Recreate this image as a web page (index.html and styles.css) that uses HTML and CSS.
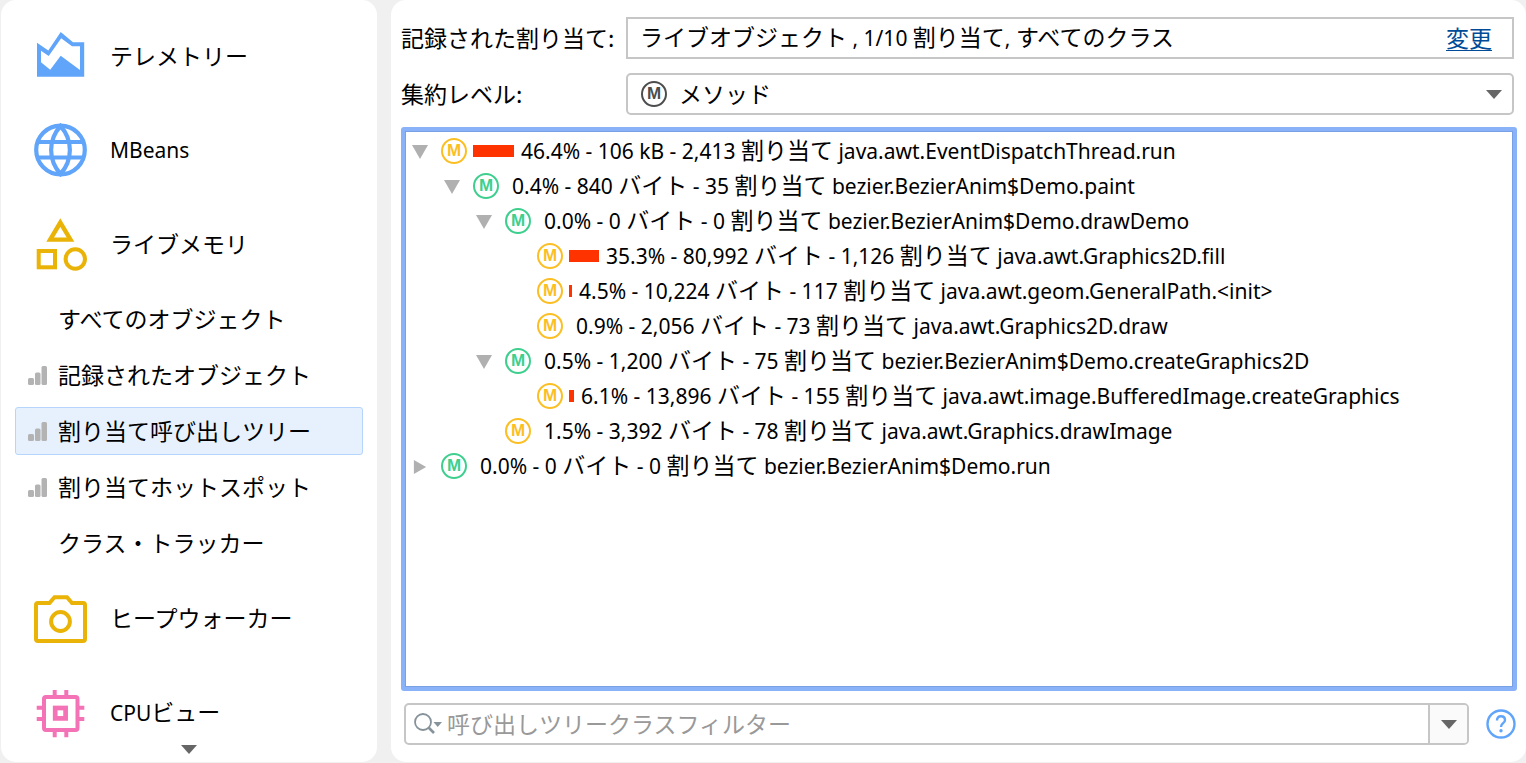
FILE: index.html
```html
<!DOCTYPE html>
<html lang="ja">
<head>
    <meta charset="UTF-8">
    <meta name="viewport" content="width=device-width, initial-scale=1.0">
    <title>割り当て呼び出しツリー</title>
    <link rel="stylesheet" href="styles.css">
</head>
<body>
    <svg class="defs" aria-hidden="true">
        <symbol id="open" viewBox="0 0 16 14"><path d="M0 0H16L8 14Z" fill="currentColor"/></symbol>
        <symbol id="closed" viewBox="0 0 14 16"><path d="M0 0V16L14 8Z" fill="currentColor"/></symbol>
        <symbol id="arrow" viewBox="0 0 16 9"><path d="M0 0H16L8 9Z" fill="currentColor"/></symbol>
        <symbol id="bars" viewBox="0 0 20 20">
            <g fill="currentColor">
                <rect x="0" y="12" width="6" height="7" rx="1.5"/>
                <rect x="7" y="6.500" width="5.500" height="12.500" rx="1.5"/>
                <rect x="13.500" y="0" width="5.500" height="19" rx="1.5"/>
            </g>
        </symbol>
    </svg>

    <nav class="sidebar">
        <a class="view" href="#telemetry">
            <svg class="view-icon blue" viewBox="0 0 54 54"><path fill="currentColor" fill-rule="evenodd" d="M3 13.7L14.3 21.5L26.7 3L39 13.3H50.2V47.7H3ZM7 21.7V33.3L16.2 40.7L26.7 26.7L46 41V17.3H38L27.2 9.3L14.7 27Z"/></svg>
            <span class="text">テレメトリー</span>
        </a>
        <a class="view" href="#mbeans">
            <svg class="view-icon blue" viewBox="0 0 54 54"><g fill="none" stroke="currentColor" stroke-width="4.2"><circle cx="26.5" cy="27" r="24.3"/><path d="M26.5 3C14 17 14 37 26.5 51C39 37 39 17 26.5 3ZM4 19H49M4 34.5H49"/></g></svg>
            <span class="latin">MBeans</span>
        </a>
        <a class="view" href="#memory">
            <svg class="view-icon yellow" viewBox="0 0 54 54"><path fill="currentColor" fill-rule="evenodd" d="M26.3 1.3L40.3 24.7H12.3ZM26.3 10L20 20.6H32.7Z"/><g fill="none" stroke="currentColor" stroke-width="4"><rect x="4.7" y="34" width="16.3" height="16.3"/><circle cx="41.3" cy="42" r="9.7"/></g></svg>
            <span class="text">ライブメモリ</span>
        </a>
        <ul class="subviews">
            <li><a class="subview" href="#all"><span class="text">すべてのオブジェクト</span></a></li>
            <li><a class="subview" href="#recorded"><svg class="bars"><use href="#bars"/></svg><span class="text">記録されたオブジェクト</span></a></li>
            <li><a class="subview selected" href="#tree" aria-current="page"><svg class="bars"><use href="#bars"/></svg><span class="text">割り当て呼び出しツリー</span></a></li>
            <li><a class="subview" href="#hotspots"><svg class="bars"><use href="#bars"/></svg><span class="text">割り当てホットスポット</span></a></li>
            <li><a class="subview" href="#tracker"><span class="text">クラス・トラッカー</span></a></li>
        </ul>
        <a class="view" href="#heap">
            <svg class="view-icon yellow" viewBox="0 0 54 54"><g fill="none" stroke="currentColor" stroke-width="4"><path d="M4 12H15.5L20.5 6.2H33L38 12H49Q51 12 51 14V48Q51 50 49 50H4Q2 50 2 48V14Q2 12 4 12Z"/><circle cx="26.5" cy="30.5" r="9.4"/></g></svg>
            <span class="text">ヒープウォーカー</span>
        </a>
        <a class="view" href="#cpu">
            <svg class="view-icon pink" viewBox="0 0 54 54"><g fill="none" stroke="currentColor" stroke-width="4"><rect x="10" y="12" width="33.5" height="33" rx="2"/><rect x="21.2" y="23" width="10.4" height="10.4" stroke-width="4.7"/><path d="M20.7 5V11M32.3 5V11M20.7 46V52.3M32.3 46V52.3M2.7 22.7H9M2.7 34H9M44 22.7H50.3M44 34H50.3"/></g></svg>
            <span><span class="latin">CPU</span>ビュー</span>
        </a>
        <button class="scroll-down" type="button" aria-label="下へ"><svg class="arrow"><use href="#arrow"/></svg></button>
    </nav>

    <main class="content">
        <div class="settings">
            <span class="text">記録された割り当て:</span>
            <div class="recorded">
                <span class="text">ライブオブジェクト<span class="latin"> , 1/10 </span>割り当て<span class="latin">, </span>すべてのクラス</span>
                <a class="change text" href="#change">変更</a>
            </div>
            <label class="text" for="level">集約レベル:</label>
            <div class="level">
                <span class="method level-icon">M</span>
                <select id="level">
                    <option>メソッド</option>
                </select>
                <svg class="arrow level-arrow"><use href="#arrow"/></svg>
            </div>
        </div>

        <ul class="tree" tabindex="0">
            <li>
                <div class="node"><svg class="toggle"><use href="#open"/></svg><span class="method amber">M</span><span class="bar" style="width: 41px"></span><span class="text">46.4% - 106 kB - 2,413 <b>割り当て</b> java.awt.EventDispatchThread.run</span></div>
                <ul>
                    <li>
                        <div class="node"><svg class="toggle"><use href="#open"/></svg><span class="method green">M</span><span class="bar"></span><span class="text">0.4% - 840 <b>バイト</b> - 35 <b>割り当て</b> bezier.BezierAnim$Demo.paint</span></div>
                        <ul>
                            <li>
                                <div class="node"><svg class="toggle"><use href="#open"/></svg><span class="method green">M</span><span class="bar"></span><span class="text">0.0% - 0 <b>バイト</b> - 0 <b>割り当て</b> bezier.BezierAnim$Demo.drawDemo</span></div>
                                <ul>
                                    <li><div class="node"><span class="toggle"></span><span class="method amber">M</span><span class="bar" style="width: 30px"></span><span class="text">35.3% - 80,992 <b>バイト</b> - 1,126 <b>割り当て</b> java.awt.Graphics2D.fill</span></div></li>
                                    <li><div class="node"><span class="toggle"></span><span class="method amber">M</span><span class="bar" style="width: 3px"></span><span class="text">4.5% - 10,224 <b>バイト</b> - 117 <b>割り当て</b> java.awt.geom.GeneralPath.&lt;init&gt;</span></div></li>
                                    <li><div class="node"><span class="toggle"></span><span class="method amber">M</span><span class="bar"></span><span class="text">0.9% - 2,056 <b>バイト</b> - 73 <b>割り当て</b> java.awt.Graphics2D.draw</span></div></li>
                                </ul>
                            </li>
                            <li>
                                <div class="node"><svg class="toggle"><use href="#open"/></svg><span class="method green">M</span><span class="bar"></span><span class="text">0.5% - 1,200 <b>バイト</b> - 75 <b>割り当て</b> bezier.BezierAnim$Demo.createGraphics2D</span></div>
                                <ul>
                                    <li><div class="node"><span class="toggle"></span><span class="method amber">M</span><span class="bar" style="width: 5px"></span><span class="text">6.1% - 13,896 <b>バイト</b> - 155 <b>割り当て</b> java.awt.image.BufferedImage.createGraphics</span></div></li>
                                </ul>
                            </li>
                            <li><div class="node"><span class="toggle"></span><span class="method amber">M</span><span class="bar"></span><span class="text">1.5% - 3,392 <b>バイト</b> - 78 <b>割り当て</b> java.awt.Graphics.drawImage</span></div></li>
                        </ul>
                    </li>
                </ul>
            </li>
            <li>
                <div class="node"><svg class="toggle"><use href="#closed"/></svg><span class="method green">M</span><span class="bar"></span><span class="text">0.0% - 0 <b>バイト</b> - 0 <b>割り当て</b> bezier.BezierAnim$Demo.run</span></div>
            </li>
        </ul>

        <div class="footer">
            <div class="filter">
                <svg class="search" viewBox="0 0 28 22"><g fill="none" stroke="currentColor"><circle cx="9" cy="9" r="8" stroke-width="1.8"/><path d="M14.5 14.5L20 20" stroke-width="2.6"/></g><path d="M19.5 9H28L23.7 14Z" fill="currentColor"/></svg>
                <input type="text" placeholder="呼び出しツリークラスフィルター" aria-label="呼び出しツリークラスフィルター">
                <button class="history" type="button" aria-label="履歴"><svg class="arrow"><use href="#arrow"/></svg></button>
            </div>
            <button class="help" type="button" aria-label="ヘルプ">
                <svg viewBox="0 0 30 30"><circle cx="15" cy="15" r="13.5" fill="none" stroke="currentColor" stroke-width="2.4"/><path d="M11 11.5Q11 7.3 15 7.3Q19 7.3 19 11Q19 13 17 14.3Q15 15.6 15 18" fill="none" stroke="currentColor" stroke-width="2.4"/><circle cx="15" cy="21.7" r="1.7" fill="currentColor"/></svg>
            </button>
        </div>
    </main>
</body>
</html>
```

FILE: styles.css
```css
* {
    box-sizing: border-box;
}
body {
    display: flex;
    gap: 14px;
    height: 100vh;
    margin: 0;
    padding: 0 0 1px 1px;
    background: #f0f0f0;
    color: #000;
    font-family: "Noto Sans CJK JP", sans-serif;
    font-size: 23px;
    line-height: 34px;
}
ul {
    list-style: none;
    margin: 0;
    padding: 0;
}
a {
    color: inherit;
    text-decoration: none;
}
button {
    display: flex;
    align-items: center;
    justify-content: center;
    border: 0;
    padding: 0;
    background: none;
}
svg {
    display: block;
    flex: none;
}
.defs {
    position: absolute;
    width: 0;
    height: 0;
}
.latin {
    font-family: "Noto Sans", sans-serif;
    font-size: 21px;
}
/* optical centring next to icons */
.text {
    padding-bottom: 2px;
}

/* sidebar */
.sidebar {
    position: relative;
    flex: none;
    width: 376px;
    padding: 9px 14px 0;
    border-radius: 15px;
    background: #fff;
    overflow: hidden;
}
.view {
    display: flex;
    align-items: center;
    gap: 22px;
    height: 94px;
    padding-left: 19px;
}
.view-icon {
    width: 54px;
    height: 54px;
}
.blue {
    color: #60a5fa;
}
.yellow {
    color: #eab308;
}
.pink {
    color: #f472b6;
}
.subviews {
    display: flex;
    flex-direction: column;
    gap: 8px;
    padding: 4px 0;
}
.subview {
    display: flex;
    align-items: center;
    height: 48px;
    padding-left: 42px;
    border: 1px solid transparent;
    border-radius: 3px;
}
.subview:has(.bars) {
    padding-left: 12px;
}
.selected {
    border-color: #b5d5fd;
    background: #e7f1fe;
}
.bars {
    width: 20px;
    height: 20px;
    margin: 2px 10px 0 0;
    color: #b3b3b3;
}
.scroll-down {
    position: absolute;
    left: 0;
    right: 0;
    bottom: 8px;
    width: 100%;
}
.arrow {
    width: 16px;
    height: 9px;
    color: #666;
}

/* main panel */
.content {
    display: flex;
    flex-direction: column;
    flex: 1;
    min-width: 0;
    padding: 17px 9px 17px 10px;
    border-radius: 15px;
    background: #fff;
}
.settings {
    display: grid;
    grid-template-columns: 225px 1fr;
    grid-auto-rows: 42px;
    row-gap: 14px;
    align-items: center;
    margin: 0 3px 12px 0;
}
.recorded {
    display: flex;
    align-items: center;
    justify-content: space-between;
    height: 42px;
    padding: 0 20px 0 12px;
    border: 2px solid #c6c6c6;
}
.change {
    color: #004b97;
    text-decoration: underline;
    text-decoration-thickness: 1px;
    text-underline-offset: 3px;
}
.level {
    position: relative;
    height: 42px;
}
.level select {
    width: 100%;
    height: 100%;
    padding: 0 40px 2px 51px;
    border: 2px solid #c6c6c6;
    border-radius: 5px;
    background: #fff;
    color: inherit;
    font: inherit;
    appearance: none;
}
.level-icon {
    position: absolute;
    left: 15px;
    top: 8px;
    color: #4d4d4d;
}
.level-arrow {
    position: absolute;
    right: 12px;
    top: 17px;
}

/* call tree */
.tree {
    flex: 1;
    min-height: 0;
    padding: 2px 7px;
    border: 4px solid #8ab2f8;
    border-radius: 3px;
    box-shadow: inset 0 0 0 1px #78a0e4;
    outline: none;
    font-family: "Noto Sans", "Noto Sans CJK JP", sans-serif;
    font-size: 21px;
    overflow: auto;
}
.tree ul {
    padding-left: 32px;
}
.tree b {
    font-family: "Noto Sans CJK JP", sans-serif;
    font-size: 23px;
    font-weight: normal;
}
.node {
    display: flex;
    align-items: center;
    height: 35px;
    white-space: nowrap;
}
.toggle {
    width: 16px;
    height: 14px;
    margin: 2px 13px 0 0;
    color: #b0b0b0;
}
.method {
    display: flex;
    align-items: center;
    justify-content: center;
    flex: none;
    width: 26px;
    height: 26px;
    border: 2px solid;
    border-radius: 50%;
    font-family: "Liberation Sans", sans-serif;
    font-size: 17px;
    font-weight: bold;
    line-height: 22px;
}
.amber {
    color: #fbbf24;
}
.green {
    color: #3ecf8e;
}
.bar {
    height: 12px;
    margin: 0 7px 0 6px;
    background: #ff3300;
}

/* filter */
.footer {
    display: flex;
    align-items: center;
    justify-content: space-between;
    gap: 17px;
    margin: 12px 1px 0 3px;
}
.filter {
    display: flex;
    align-items: center;
    flex: 1;
    height: 42px;
    padding-left: 8px;
    border: 2px solid #c6c6c6;
    border-radius: 5px;
    overflow: hidden;
}
.search {
    width: 28px;
    height: 22px;
    color: #87939a;
}
.filter input {
    flex: 1;
    min-width: 0;
    height: 38px;
    padding: 0 5px 2px;
    border: 0;
    outline: none;
    background: none;
    color: inherit;
    font: inherit;
}
.filter input::placeholder {
    color: #999;
}
.history {
    width: 39px;
    height: 38px;
    border-left: 2px solid #c6c6c6;
    background: #fafafa;
}
.help {
    width: 30px;
    height: 30px;
    color: #60a5fa;
}
.help svg {
    width: 30px;
    height: 30px;
}
```
